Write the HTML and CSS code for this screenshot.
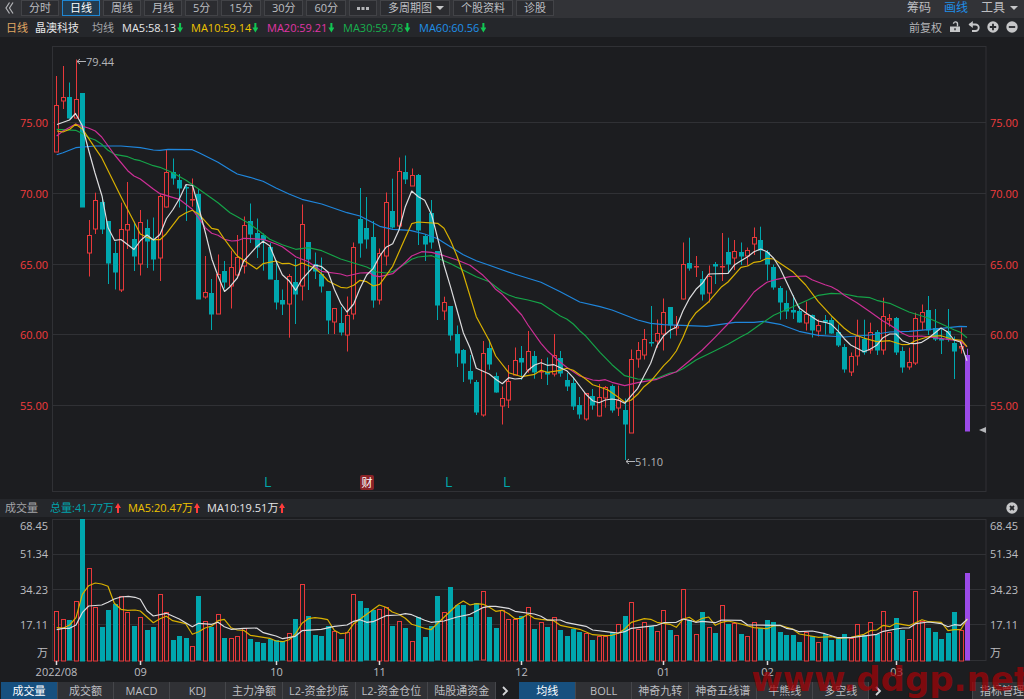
FILE: index.html
```html
<!DOCTYPE html>
<html lang="zh-CN">
<head>
<meta charset="utf-8">
<meta name="viewport" content="width=device-width, initial-scale=1">
<title>晶澳科技 日线</title>
<link rel="stylesheet" href="styles.css">
</head>
<body>
<header class="toolbar">
  <button class="collapse" aria-label="收起"><svg width="9" height="12" viewBox="0 0 9 12"><path d="M4.500 .5L1 6l3.500 5.500M8 .5L4.500 6 8 11.500"/></svg></button>
  <nav class="periods">
    <button>分时</button><button class="active">日线</button><button>周线</button><button>月线</button><button>5分</button><button>15分</button><button>30分</button><button>60分</button><button aria-label="更多"><svg class="dots" width="12" height="3" viewBox="0 0 12 3"><path d="M0 0h3v3H0zM4.500 0h3v3h-3zM9 0h3v3H9z"/></svg></button><button>多周期图<span class="caret"></span></button><button>个股资料</button><button>诊股</button>
  </nav>
  <div class="tools">
    <button>筹码</button><button class="on">画线</button><button>工具<span class="caret"></span></button>
  </div>
</header>

<section class="legend">
  <span class="gold">日线</span>
  <span class="name">晶澳科技</span>
  <span class="label">均线</span>
  <span class="ma first">MA5:58.13<i class="down"></i></span>
  <span class="ma yellow">MA10:59.14<i class="down"></i></span>
  <span class="ma pink">MA20:59.21<i class="down"></i></span>
  <span class="ma green">MA30:59.78<i class="down"></i></span>
  <span class="ma blue">MA60:60.56<i class="down"></i></span>
  <div class="actions">
    <span>前复权</span>
    <button aria-label="解锁"><svg viewBox="0 0 12 12"><path d="M1 5.500h10V11H1z" fill="#c6c7c9"/><path d="M8.500 5.500V3a2 2 0 0 0-4-.2" fill="none" stroke="#c6c7c9" stroke-width="1.400"/><path d="M5.300 7.300h1.400v2H5.300z" fill="#25272b"/></svg></button>
    <button aria-label="撤销"><svg viewBox="0 0 12 12"><path d="M1.500 3.500h6a3.200 3.200 0 0 1 0 6.500H4" fill="none" stroke="#c6c7c9" stroke-width="1.800"/><path d="M4.800 0v7L.5 3.500z" fill="#c6c7c9"/></svg></button>
    <button aria-label="放大"><svg viewBox="0 0 12 12"><circle cx="6" cy="6" r="5.700" fill="#c6c7c9"/><path d="M6 2.800v6.400M2.800 6h6.400" stroke="#25272b" stroke-width="1.800"/></svg></button>
    <button aria-label="缩小"><svg viewBox="0 0 12 12"><circle cx="6" cy="6" r="5.700" fill="#c6c7c9"/><path d="M2.800 6h6.400" stroke="#25272b" stroke-width="1.800"/></svg></button>
  </div>
</section>

<main class="price-pane">
  <div class="axis price left"><span>75.00</span><span>70.00</span><span>65.00</span><span>60.00</span><span>55.00</span></div>
  <div class="plot"><svg id="price" role="img" aria-label="日K线图"></svg></div>
  <div class="axis price"><span>75.00</span><span>70.00</span><span>65.00</span><span>60.00</span><span>55.00</span></div>
</main>

<section class="legend volume-legend">
  <span class="label">成交量</span>
  <span class="teal">总量:41.77万<i class="up"></i></span>
  <span class="yellow">MA5:20.47万<i class="up"></i></span>
  <span>MA10:19.51万<i class="up"></i></span>
  <div class="actions"><button aria-label="关闭"><svg viewBox="0 0 12 12"><circle cx="6" cy="6" r="5.700" fill="#c6c7c9"/><path d="M4 4l4 4M8 4L4 8" stroke="#25272b" stroke-width="1.800"/></svg></button></div>
</section>

<section class="volume-pane">
  <div class="axis volume left"><span>68.45</span><span>51.34</span><span>34.23</span><span>17.11</span><span>万</span></div>
  <div class="plot"><svg id="volume" role="img" aria-label="成交量图"></svg></div>
  <div class="axis volume"><span>68.45</span><span>51.34</span><span>34.23</span><span>17.11</span><span>万</span></div>
</section>

<footer class="bottom">
  <nav class="tabs">
    <button class="active">成交量</button><button>成交额</button><button>MACD</button><button>KDJ</button><button>主力净额</button><button>L2-资金抄底</button><button>L2-资金仓位</button><button>陆股通资金</button>
  </nav>
  <button class="next" aria-label="更多指标"><svg width="7" height="10" viewBox="0 0 7 10"><path d="M1 1l4 4-4 4"/></svg></button>
  <nav class="tabs">
    <button class="active">均线</button><button>BOLL</button><button>神奇九转</button><button>神奇五线谱</button><button>牛熊线</button><button>多空线</button>
  </nav>
  <button class="next" aria-label="更多主图指标"><svg width="7" height="10" viewBox="0 0 7 10"><path d="M1 1l4 4-4 4"/></svg></button>
  <button class="manage">指标管理</button>
  <div class="watermark">www.ddgp.net</div>
</footer>
<script src="chart.js"></script>
</body>
</html>
```

FILE: styles.css
```css
* { box-sizing: border-box; }
body {
  margin: 0;
  height: 100vh;
  display: flex;
  flex-direction: column;
  overflow: hidden;
  background: #1c1d20;
  color: #bdbec1;
  font: 11px/17px "Open Sans", "Noto Sans CJK SC", sans-serif;
}
button {
  margin: 0;
  padding: 0;
  border: 0;
  background: none;
  color: inherit;
  font: inherit;
  white-space: nowrap;
}
svg { display: block; }
.toolbar {
  flex: none;
  display: flex;
  align-items: flex-start;
  height: 18px;
  background: #323337;
}
.collapse {
  width: 21px;
  height: 16px;
  display: flex;
  align-items: center;
  padding-left: 5px;
}
.collapse path { fill: none; stroke: #b4b5b8; stroke-width: 1.2; }
.periods { display: flex; gap: 3px; }
.periods button {
  height: 16px;
  padding: 0 7px;
  border: 1px solid #424347;
  background: #2b2c30;
  line-height: 14px;
}
.periods .active {
  border-color: #1f86d2;
  background: #223b50;
  color: #fff;
}
.dots { fill: #b4b5b8; }
.caret {
  display: inline-block;
  margin-left: 5px;
  border: 4px solid transparent;
  border-top-color: #c6c7c9;
  border-bottom: 0;
  vertical-align: 2px;
}
.periods .caret { margin-left: 4px; margin-right: -2px; }
.tools {
  display: flex;
  gap: 13px;
  margin-left: auto;
  padding-right: 6px;
  font-size: 12px;
}
.tools button { line-height: 16px; }
.tools .on { color: #1f8fe8; }

.legend {
  flex: none;
  display: flex;
  align-items: center;
  height: 19px;
  padding: 0 6px 1px;
  background: #25272b;
  color: #e6e6e8;
  white-space: nowrap;
}
.gold { color: #e0a763; }
.name { margin: 0 13px 0 7px; }
.label { color: #a4a5a8; }
.ma { min-width: 76px; }
.ma.first { min-width: 69px; margin-left: 8px; }
.yellow { color: #f0c400; }
.pink { color: #e035a6; }
.green { color: #18b04e; }
.blue { color: #1f8fe8; }
.teal { color: #00a3ab; }
.down, .up {
  display: inline-block;
  width: 6px;
  height: 10px;
  margin-left: 1px;
  background: #12c653;
  clip-path: polygon(33% 0, 67% 0, 67% 50%, 100% 50%, 50% 100%, 0 50%, 33% 50%);
  vertical-align: -1px;
}
.up { background: #ff3b3b; transform: rotate(180deg); }
.actions {
  display: flex;
  align-items: center;
  gap: 7px;
  margin-left: auto;
  color: #b4b5b8;
}
.actions svg { width: 12px; height: 12px; }
.volume-legend { gap: 7px; height: 18px; padding-left: 5px; }
.volume-legend .label { margin-right: 5px; }

.price-pane, .volume-pane {
  display: flex;
  min-height: 0;
}
.price-pane { flex: 462 1 0; }
.volume-pane { flex: 165 1 0; }
.plot { flex: 1; min-width: 0; overflow: visible; }
.plot svg { width: 100%; height: 100%; overflow: visible; }
.axis { width: 38px; padding-left: 4px; }
.axis.left { width: 52px; padding: 0 4px 0 0; text-align: right; }
.price {
  display: flex;
  flex-direction: column;
  justify-content: space-between;
  color: #f23c3e;
}
.price.axis { padding-top: 77px; padding-bottom: 85px; }
.volume { display: grid; grid-template-rows: 28fr 36fr 35fr 28fr 38fr; }

.bottom {
  position: relative;
  flex: none;
  display: flex;
  height: 17px;
  padding-left: 1px;
}
.tabs { display: flex; }
.tabs button {
  min-width: 56px;
  padding: 0 6px;
  border-right: 1px solid #45464a;
  background: #303135;
  line-height: 16px;
}
.tabs .active { min-width: 57px; background: #17507f; color: #fff; }
.next { width: 23px; padding-left: 6px; }
.next path { fill: none; stroke: #d2d3d5; stroke-width: 1.8; }
.manage {
  width: 52px;
  margin-left: auto;
  padding-left: 7px;
  border-left: 1px solid #45464a;
  background: #303135;
  line-height: 16px;
  text-align: left;
  overflow: hidden;
}
.watermark {
  position: absolute;
  right: -6px;
  bottom: 0;
  color: rgba(158, 4, 8, .76);
  font: bold 34px/39px "DejaVu Sans", sans-serif;
  pointer-events: none;
}

.grid { stroke: #303135; fill: none; }
.rise { stroke: #e8383a; fill: #1c1d20; }
.fall { stroke: #00a7ae; fill: #00a7ae; }
.last { stroke: #9b4ae8; fill: #9b4ae8; }
.line { fill: none; stroke-width: 1.2; stroke-linejoin: round; }
.white { stroke: #dcdcde; }
.l-yellow { stroke: #d8b000; }
.l-pink { stroke: #cc2f96; }
.l-green { stroke: #15a348; }
.l-blue { stroke: #1f86dc; }
.note { fill: #b4b5b8; font-size: 11px; }
.mark { fill: #00a7ae; font-size: 14px; }
.badge { fill: #8a2327; }
.badge-text { fill: #fff; font-size: 11px; text-anchor: middle; }
.tick { stroke: #dcdcde; stroke-width: 1.5; }
.date { fill: #bdbec1; font-size: 11px; text-anchor: middle; }
.arrow { fill: none; stroke: #b4b5b8; }
.pointer { fill: #b4b5b8; }
```

FILE: chart.js
```js
// Each candle: direction, high, body top, body bottom, low (plot units); direction r = rise, f = fall, p = latest.
const candles = `r 76 105 152 152|r 66 97.5 101.7 109|f 82.5 97.5 118.5 118.5|r 59.5 99.5 118.5 118.5|f 93.5 93.5 207 207|r 220 235.5 253 276.5|r 192.7 200 228.7 234|f 196.7 202.7 230 234|f 221.7 221.7 263.7 284|f 241.7 253.5 272.7 289.5
r 202.7 229.5 290.7 292|r 182 224 230 249|f 221.7 239 256 271|r 210 222.5 264 275.5|f 219.5 228.5 241.5 268|f 217.5 239.5 259 270.7|r 194.5 196 257.7 281|r 150 172.5 207.7 207.7|f 158.5 172.5 178.7 184.7|f 174 180 187.7 207.5
f 184.5 187 188 221|r 178.5 199.5 200.5 206.7|f 189 194 298.7 298.7|r 256 292.5 297.5 298.7|f 279 293.5 314 330|r 254.5 274 313.5 313.5|f 261 271 282 288.5|r 250.7 267.5 286.5 308.5|r 235 257.5 275.5 275.5|r 216.5 225.5 266.5 273.5
f 203.5 221 234 243|f 218.5 233.5 247.7 258|f 233.5 235 240 270.7|f 243 247 278.5 278.5|f 260 280.5 302.5 309.5|f 289.5 300.5 304 315|r 274 276 303.5 337.7|f 259 282 293.7 324|r 204.5 224.5 286.5 300.5|f 242 242 259 290
f 252.5 264 270.7 279|f 257.5 274 286 292.5|f 291.5 291.5 320 334|r 308 308 321.5 334|f 307 323 332 335.5|r 296.5 315.5 335.5 351.5|r 242.5 247.5 314.7 319.5|f 188 219.5 243 257.7|f 197 228.7 239.7 248.7|f 221 237 299.7 307.7
r 248.5 253.5 300.5 304.5|r 192.5 202.5 256.7 265.5|f 178.7 211 227 228.5|r 157.5 171.5 226.7 226.7|f 155.5 172.5 179.5 184|r 168.5 175.5 186 186|f 174 175.5 230.5 245|f 234 236 244 261|f 200 213.7 243 248.7|f 251 251.7 306 320
r 296.7 302.7 311.7 320|f 306 306 334.7 340.5|f 325.5 334 353 367|f 349 350.5 363.5 382|f 355 371 379 383.7|f 380 382 411.5 415|r 341 353.5 415.5 416.7|f 339.5 348 364 369.7|f 372.5 376.5 392.7 392.7|r 386.5 398 405.5 424.5
r 365 381.5 400.7 408|r 347.5 360 375 375|f 346 358 361.5 380|r 331 351.5 370.5 372.7|f 351 356 371.5 378.7|r 359 371.5 372.5 379|f 357.5 372.5 374 385|r 334 355.5 374.5 376.5|f 351 358 372.7 376.7|f 373 380 385.7 391
f 377.5 383 406 410|f 397 405 414 418.7|r 393.5 393.5 419 420.7|f 389 396 405 409.7|r 384 397.5 416.5 416.5|r 386 387.5 398.5 407.7|f 384.5 386 410 412.7|r 385.5 400.5 408.5 416|f 398.5 410.5 424 460|r 349.5 359 432.5 433
r 342 350.5 359.5 367.7|r 329 339.5 355.5 359.5|f 306 342 343 346.5|r 319.5 333.5 341.5 347.7|r 298.5 312 333.7 350.5|f 307 307 325 338.5|r 316 325.5 328 335.5|r 242.5 264.5 299.5 299.5|f 237.7 263.7 269 270.7|r 256 266 267 277
f 271 279.5 294.7 300.5|r 265.5 276.5 293.7 302.5|f 262 264 266 284|r 233 266 267 281|f 237.7 252.5 264.5 273.5|r 240 251.5 258.5 270|f 242.5 252 256 265|r 247.5 250.5 256 265.7|r 227.5 237.5 244 255|f 226.7 240.5 250.7 259.5
f 250 252 263.7 280.5|f 264.5 267.5 287.7 289.7|f 286 288.7 302.7 319.7|f 290.5 303 311 319|f 295 310 312 319|f 306 311.7 322.7 322.7|r 301.5 314.5 323.5 330.5|f 314.5 315.5 330 337.5|r 319.5 325.5 331.5 336.5|f 315 320.5 322 334.5
f 317.5 320 333 333.7|f 324.5 332 345 347|f 344 347 368.7 372.7|r 352.5 356.5 372.5 376|r 319.7 336.5 356.5 365.5|f 319.7 339.7 352.5 354.7|r 322.7 332.5 350 353.7|f 330 332 350 355|r 297.7 316.5 350.7 354.7|r 314 318.5 320.5 326.5
f 317 318 351.5 355|f 346.7 351.7 368 372.7|r 347.7 362.5 367.7 369.7|r 312.7 318.5 363.5 365|r 304.5 312.5 322.5 330|f 296 310 330 335|f 309 328.7 339.5 341|f 328 339.7 341 354|f 309 331.7 340 341.7|f 336.5 343 350.7 379
r 327.5 346 347.5 353.5|p 348.7 355 431 431`.split(/[|\n]/).map(s => {
  const [dir, ...v] = s.trim().split(' ');
  return { dir, v: v.map(Number) };
});

const volumes = [610.5,618.5,620.3,600.5,519,567.5,607,627,610.3,604,595.5,612,626,616.5,630,627,594,611.5,640,636,637.7,645.5,596.3,620.5,627,613.5,638,637.5,635.5,627.5,639,641.7,643.3,638.7,640,641.3,632.5,618.7,583.5,616,635,636.3,626.3,630.5,638.7,631.5,594,601,608.3,610.3,608.5,606.5,626,620.5,628,641,617,637,626,596.3,611.5,587,604.7,604.7,617,603.3,591.3,617,628,609.5,618.5,618.5,616,606.5,629,622,627,617,630,636,629,632,633,640,636,636,632,624,616,601.5,629,621.5,626.3,631,610,630,634.5,588.5,620.3,634,612,626.5,633.3,605,624,622.5,634.3,635.5,621.5,628.3,620.3,622,632.3,635.3,635.3,642.3,631.5,636.3,641.5,634,640,638.3,634.3,638,623.5,635,621.7,633.7,610.5,632,618.3,630,638.5,590.5,621,628,632.3,639,633.3,612,630,573.3];

const priceLines = {
  'l-blue': '56.7,154.7 63,152.7 75.7,147.7 95.3,146 121,146 140.3,147.7 153.3,150 160,150.3 168,149.3 192.3,149.7 199,152.7 218,162.3 231.7,170.7 237.3,174 250,177.3 263,181.3 276,188 289,194 302,199.3 321.7,204 347,212.7 360,216 379.7,226.3 392.7,229.3 410,230.3 424.7,234 437.7,238.7 444,242.7 463.3,254.7 476.3,260.7 489.3,265.3 515,274.3 541,282.3 560.3,291.7 579.7,302 600,306.7 612,310 637.7,320 650.7,323.3 663.7,324.7 706.7,326.3 735,322.3 754,322.3 763.3,321.3 780,324.3 799,331.3 818.3,335.3 844.3,337 870,335 889.7,332 909,331.3 941,328.3 960,326.3 967,326.7',
  'l-green': '56.7,129.3 75.7,130.3 82.7,133.7 89,137.7 95.3,140 101.7,144.3 108,150.3 114.7,154.3 127.7,156.7 134,159.3 140.3,160.7 153.3,165.7 160,167.3 172.7,172.7 186,180.3 199,189.3 211.7,198.3 218,202.7 230,212.7 237.3,216.7 250,224 269.7,239.3 282.3,244.7 295.7,249.3 308.3,247.7 321.7,250.7 340.7,259 353.7,263 366.7,267 376.7,272 386.7,273 392.7,271.7 405.3,263.7 411.7,259.3 418,257 431.7,255.7 437.7,258.3 450.7,263.7 463.3,270.3 476.3,276.7 489.3,281.7 502.3,291.7 508.7,295 515,297.3 528,300 541,303.3 560.3,316 566.7,319 573.3,324 579.7,330.7 586,336.3 600,352.3 612,364.7 624.7,375.7 637.7,379 650.7,379.3 657,378.3 670,373 676.3,372 683,368.7 696,360 715,350.7 728,344.3 741,336.7 747.7,333.3 760.7,324 773.7,315.3 790,308 805.7,301 818.3,295.3 831.3,293.3 844.3,294 857.3,296.7 870,297.7 876.7,300.3 889.7,303.3 902.3,309 909,312 928.3,318 941,323.7 954,329.7 960.3,332.3 967,337.7',
  'l-pink': '56.7,136 63,131 75.7,124 82.7,126.3 89,128.3 95.3,131 101.7,137 114.7,155 127.7,170.7 134,176 140.3,179 153.3,189 160,193.7 179.3,199.3 192.3,209.3 199,218.3 205.3,227.7 211.7,233.3 218,235.3 224.3,239.3 231.7,241 237.3,240.7 243.7,238.3 263,239.3 276,244 282.3,246.7 295.7,256.7 308.3,261.7 321.7,271.3 340.7,274 347,276 360,273 370,272.7 373.3,275.7 379.7,276.7 392.7,273.7 405.3,262.3 411.7,256 421.7,251.7 431.7,252.3 444,255.7 457,260 470,265.3 483,275.3 489.3,281.7 495.7,289.3 502.3,294.3 508.7,301 521.7,315 528,325 541,343.3 547.3,350.7 560.3,362.3 566.7,367.3 579.7,376 592.7,380 599,380.7 605.3,379.7 612,382.3 624.7,385.7 637.7,382.7 657,379.3 676.3,371.7 689.3,361 702.3,350 715,337.3 731.7,320 746.7,301.7 754,292 760.7,286.7 767,282.3 776.7,279.3 790,276.7 805.7,276 812,279.7 825,284.7 831.3,286.7 837.7,290.3 844.3,295.3 857.3,303 870,311.7 883,321 889.7,324.7 902.3,333.3 909,336.3 921.7,336 934.7,337.7 947.7,339.3 960.3,341 967,346.7',
  'l-yellow': '57,131 63,132 69.7,129.3 75.7,124.3 82.7,129.3 95.3,148.3 101.7,157.7 121,196.7 134,221.7 140.3,234 147,237.3 153.3,239.7 160,239.7 166.3,233.7 179.3,216.7 186,212.7 192.3,210.3 199,214.3 211.7,228.3 218,229.7 224.3,239 230,246.7 237.3,256 256.7,269 263,263.7 276,261 282.3,263.7 289,263.3 295.7,266 302,263 315,268.3 321.7,274 328,281 340.7,287.3 347,288 353.7,285.3 360,280.3 366.7,281.7 373.3,286 379.7,284.3 392.7,266.3 405.3,237.7 411.7,223.7 418,222 437.7,223.3 444,228.3 450.7,241 457,256 463.3,274 476.3,316.7 489.3,340.7 495.7,356 508.7,372.7 521.7,376.7 534.7,374.3 541,370.3 547.3,372.3 560.3,370.3 566.7,368.3 573.3,370.3 586,379.3 592.7,384.7 599,386.7 608,390 618.3,397.3 624.7,402.3 631.3,400 637.7,394.3 644,386.7 650.7,381.3 663.7,365.7 670,359.3 676.3,351 683,337.3 689.3,322 696,312.7 708.7,301.7 721.7,286.7 728,282 741,267.3 747.7,266 754,262.3 760.7,261.3 767,258.3 773.7,259 792.7,271.7 805.7,285 818.3,301.7 831.3,315.7 844.3,328.3 850.7,333 863.7,338 876.7,341.7 889.7,340.7 902.3,344.7 909,344.3 915.3,340.7 928.3,336.7 941,335.7 954,339.7 961.7,340.3 967,346.7',
  'white': '57,124.5 69.5,120 75.5,113.5 82,125 89,151.5 95,173 102,196 108,227.5 114.5,240.3 121,239.5 134,249.5 140.5,240.5 147,235 153.5,240 160,234.5 166.5,218.5 173,209.5 179.5,198.5 186,184.5 192.5,185.5 199,208.5 205.5,233 212,259.5 218,276 224.5,291.5 230,286.7 237.3,278 243.7,261 256.7,246.7 263,241.3 269.7,245.7 276,261 282.3,274.7 289,280.7 295.7,290.3 302,279.3 315,265 321.7,266.7 328,272 334.3,289.3 340.7,303.3 347,312 353.7,304 360,288.3 366.7,275 373.3,268.3 379.7,256 386,247.3 392.7,243.7 399,230 405.3,206.7 411.7,191 418.3,196.7 424.7,200.3 431.7,215 437.7,238.3 444,265 450.7,287.3 457,310 463.3,332.7 470,347.7 476.3,368.3 489.3,374 495.7,379.3 502.3,383.7 508.7,377.7 515,379 521.7,378.3 528,370.3 534.7,365 541,362.7 547.3,365.3 554,364.7 566.7,370.7 573.3,377.7 579.7,386 586,394.3 592.7,400.7 599,402.7 605.3,400 612,399 618.3,400 624.7,403.3 631.3,395.7 637.7,388.3 644,376 650.7,363.3 657,345.7 663.7,335.7 670,330.3 676.3,327.3 683,310.7 689.3,298.7 696,289.3 702.3,283.3 708.7,274 728,273.3 734.7,264.7 741,260.7 747.7,256.7 754,251.7 760.7,249 767,251.7 773.7,258.3 780,268.3 792.7,295 799,307.7 805.7,312.7 818.3,321 825,322.3 831.3,324.3 837.7,330.7 844.3,338.7 850.7,345 863.7,351.7 870,349.3 876.7,345.3 883,337.7 889.7,334 896,334 902.3,340.7 909,343.3 915.3,343.7 921.7,342.3 928.3,338.3 941,328 947.7,332 954,340 960.3,342 967,360.7'
};

const volumeLines = {
  'l-yellow': '56.7,627.7 63.3,628 69.7,625 76,617.7 82.3,594.3 88.7,585.7 95.3,583 101.7,584 108,586.3 114.3,603.3 121,609.3 127.7,610.3 135,610 140.3,611 153.3,622.7 160,618.7 166.3,616.3 172.7,620.7 185.7,623.7 192.3,634.3 198.7,631.7 205,628 211.7,626 218,620.7 224.3,619.3 231,627.7 237.3,630 243.7,630.3 250.3,635.3 269.7,638.3 276,641 282.7,641.7 289,639.7 295.3,634.3 302,623.3 308.3,618.7 315,617.7 321.3,618.3 327.7,619.7 334.3,630.3 340.7,633.7 347,633 353.7,623.7 366.7,614.3 379.3,605 386,607.3 392.3,612 398.7,614.3 405.3,618.3 411.7,624.3 424.7,628.3 431,629.7 444,617.3 457,605 463.3,601 470,605 476.3,603.7 483.3,604.3 489.3,607.3 495.7,611.3 502,610.3 508.7,613.7 515,618.7 521.3,618.3 528,614.3 534.3,618.3 541,619.3 553.7,620.7 560.3,625.3 579.7,629.3 592.7,634.7 605.3,635.7 612,635.3 618.3,633.3 624.7,629 631.3,622.3 644.3,618.7 650.7,619.3 657,622.3 670,624.3 676.3,627.3 683,619.3 689.3,617.3 695.7,621.7 702.3,618.3 708.7,617 715.3,625.3 721.7,622.3 728.3,621 741,624 754,627.7 767,628.7 773.3,626 780,625.3 792.7,629 799.3,634 818.7,637.3 831.7,636.7 838,638.3 851,637.3 864,634.3 870.3,630.7 876.7,630 883.3,625.3 889.7,626.7 896,623.3 909,625.7 922,619.7 928.7,621.7 941.3,622.3 948,630.7 954.3,629.7 960.7,629.7 967.3,618.7',
  'white': '56.7,629.7 63.3,628.3 69.7,628.3 76,625 82.3,612.7 88.7,606 101.7,605 108,602.3 114.3,599 121,597 128.3,596.3 135,597.3 140.3,599.3 147,610.7 153.3,616 166.3,613.3 179.3,619 192.3,626.7 198.7,623.3 211.7,624.3 218,622.3 224.3,626.7 231,629.3 243.7,628.3 256.7,628 263.3,632.7 269.7,634.3 276,636 282.7,638.7 295.3,636.3 302,630.7 321.3,629.3 334.3,626.3 347,625 353.7,621.3 360,619.7 366.7,622.3 373,621.7 386,615.7 398.7,615 405.3,613.7 411.7,614.7 424.7,620.3 431,622.3 444,621 457,617 470,614.3 482.7,607.7 489.3,606.3 495.7,606.3 508.7,608.3 515,611.3 534.3,614 541,616.3 547.3,620 560.3,620 566.7,622.7 586,626.3 592.7,630 612,632.3 618.3,633 624.7,631.7 631.3,628.3 657,625.3 663.7,622.7 676.3,622.3 683,619 689.3,620.3 695.7,622.3 702.3,621.3 715.3,622.7 721.7,620 741,620.3 747.7,625 780,625.3 786.3,628.3 792.7,629.3 799.3,631.7 812.3,631 825,633.7 838,637.7 851,637.7 876.7,634.3 883.3,631.3 896,629 902.7,628 909,628 915.7,623.7 928.7,622 941.3,623.7 948,626.7 954.3,624.7 960.7,625.3 967.3,619.3'
};

const kinds = { r: 'rise', f: 'fall', p: 'last' };
const candleX = i => Math.round(56.4 + i * 6.458) + .5;

// Maps plot units to the current size of an svg.
function scaler(svg, x0, y0, w, h) {
  const box = svg.getBoundingClientRect();
  const kx = box.width / w, ky = box.height / h;
  return { x: v => (v - x0) * kx, y: v => (v - y0) * ky };
}
function path(s, d) {
  return d.split(' ').map(p => { const [x, y] = p.split(','); return s.x(x).toFixed(1) + ',' + s.y(y).toFixed(1); }).join(' ');
}
const hline = (s, y) => `<path class="grid" d="M${s.x(52)} ${s.y(y)}H${s.x(986)}"/>`;
function bar(s, x, top, bottom, cls) {
  const h = Math.max(1, Math.round(s.y(bottom) - s.y(top)));
  return `<rect class="${cls}" x="${s.x(x) - 2}" y="${Math.round(s.y(top)) + .5}" width="4" height="${h - .5}"/>`;
}
const polylines = (s, set) => Object.entries(set).map(([c, d]) => `<polyline class="line ${c}" points="${path(s, d)}"/>`).join('');

function drawPrice() {
  const svg = document.getElementById('price');
  const s = scaler(svg, 52, 37, 934, 462);
  let out = `<rect class="grid" x=".5" y="${s.y(46.5)}" width="${s.x(986) - .5}" height="${s.y(491.5) - s.y(46.5)}"/>`;
  [122.5, 193.5, 264.5, 334.5, 405.5].forEach(y => out += hline(s, y));
  candles.forEach((c, i) => {
    const [hi, top, bot, lo] = c.v, x = candleX(i), k = kinds[c.dir];
    out += `<path class="${k}" d="M${s.x(x)} ${s.y(hi)}V${s.y(lo)}"/>` + bar(s, x, top - .5, bot - .5, k);
  });
  out += polylines(s, priceLines);
  const note = (x, y, t) => `<path class="arrow" d="M${s.x(x)} ${s.y(y)}h9m-6 -2.500l-3 2.500 3 2.500"/><text class="note" x="${s.x(x) + 9}" y="${s.y(y) + 4}">${t}</text>`;
  out += note(77, 61.5, '79.44') + note(626, 461.5, '51.10');
  [264, 445, 503].forEach(x => out += `<text class="mark" x="${s.x(x)}" y="${s.y(487)}">L</text>`);
  out += `<rect class="badge" x="${s.x(360)}" y="${s.y(475)}" width="14" height="15" rx="2"/><text class="badge-text" x="${s.x(367)}" y="${s.y(487)}">财</text>`;
  out += `<path class="pointer" d="M${s.x(979)} ${s.y(430)}l7 -3v6z"/>`;
  svg.innerHTML = out;
}

function drawVolume() {
  const svg = document.getElementById('volume');
  const s = scaler(svg, 52, 517, 934, 165);
  let out = `<rect class="grid" x=".5" y="${s.y(519.5)}" width="${s.x(986) - .5}" height="${s.y(660.5) - s.y(519.5)}"/>`;
  [554.5, 589.5, 624.5].forEach(y => out += hline(s, y));
  volumes.forEach((v, i) => out += bar(s, candleX(i), v, 660.5, kinds[candles[i].dir]));
  out += polylines(s, volumeLines);
  [[56.5, '2022/08'], [140.5, '09'], [276.5, '10'], [379.5, '11'], [521.5, '12'], [663.5, '01'], [767.5, '02'], [896.5, '03']].forEach(([x, t]) => {
    out += `<path class="tick" d="M${s.x(x)} ${s.y(661)}v4"/><text class="date" x="${s.x(x)}" y="${s.y(676)}">${t}</text>`;
  });
  svg.innerHTML = out;
}

function draw() { drawPrice(); drawVolume(); }
draw();
window.addEventListener('resize', draw);
```
